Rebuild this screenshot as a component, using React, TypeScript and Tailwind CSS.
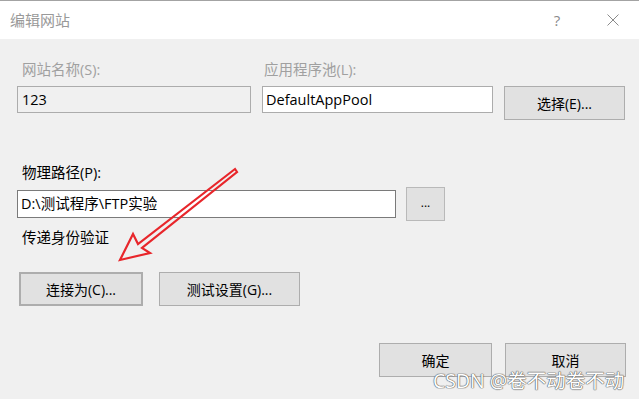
import React from "react";

const font = { fontFamily: '"Open Sans", "Noto Sans CJK SC", sans-serif' };

function Btn({ children, className = "" }: { children: React.ReactNode; className?: string }) {
  return (
    <div
      className={`flex items-center justify-center bg-[#e1e1e1] border border-[#adadad] text-[14px] text-black ${className}`}
    >
      {children}
    </div>
  );
}

export default function App() {
  return (
    <div
      className="relative w-[639px] h-[399px] overflow-hidden bg-[#f0f0f0] border-t border-[#a3a3a3]"
      style={font}
    >
      {/* title bar */}
      <div className="h-[38px] bg-white flex items-center pl-[10px] pr-[18px]">
        <div className="text-[15px] text-[#999999] flex-1">编辑网站</div>
        <div className="text-[15px] text-[#8a8a8a] w-[20px] text-center mr-[40px]">?</div>
        <svg width="12" height="12" viewBox="0 0 12 12" className="mr-[2px]">
          <path d="M0.5 0.5 L11.5 11.5 M11.5 0.5 L0.5 11.5" stroke="#8a8a8a" strokeWidth="1" fill="none" />
        </svg>
      </div>

      {/* body */}
      <div className="flex flex-col pl-[17px] pt-[21px]">
        {/* row 1 */}
        <div className="flex">
          <div className="flex flex-col w-[234px]">
            <div className="h-[20px] leading-[20px] text-[14.5px] text-[#a0a0a0] pl-[5px]">网站名称(S):</div>
            <div className="mt-[6px] h-[27px] border border-[#acacac] bg-[#f0f0f0] flex items-center pl-[4px] text-[14.5px] text-black">
              123
            </div>
          </div>
          <div className="flex flex-col w-[231px] ml-[11px]">
            <div className="h-[20px] leading-[20px] text-[14.5px] text-[#a0a0a0] pl-[2px]">应用程序池(L):</div>
            <div className="mt-[6px] h-[27px] border border-[#acacac] bg-white flex items-center pl-[3px] text-[14.5px] text-black">
              DefaultAppPool
            </div>
          </div>
          <Btn className="ml-[11px] mt-[26px] w-[121px] h-[34px]">选择(E)...</Btn>
        </div>

        {/* physical path */}
        <div className="mt-[43px] h-[20px] leading-[20px] text-[14.5px] text-black pl-[5px]">物理路径(P):</div>
        <div className="flex items-center mt-[4px]">
          <div className="w-[379px] h-[28px] border border-[#7a7a7a] bg-white flex items-center pl-[3px] text-[14.5px] text-black">
            D:\测试程序\FTP实验
          </div>
          <Btn className="ml-[10px] w-[39px] h-[34px] border-[#b9b9b9]">
            <span className="text-[12px] leading-none -mt-[2px]">...</span>
          </Btn>
        </div>

        <div className="mt-[7px] h-[20px] leading-[20px] text-[14.5px] text-black pl-[5px]">传递身份验证</div>

        <div className="flex mt-[24px] ml-[2px]">
          <Btn className="w-[124px] h-[34px] border-2 border-[#0078d7]">连接为(C)...</Btn>
          <Btn className="ml-[16px] w-[141px] h-[34px]">测试设置(G)...</Btn>
        </div>

        <div className="flex mt-[37px] ml-[362px]">
          <Btn className="w-[113px] h-[34px]">确定</Btn>
          <Btn className="ml-[13px] w-[121px] h-[34px]">取消</Btn>
        </div>
      </div>

      {/* watermark */}
      <div className="absolute left-[433px] top-[368px] text-[19.5px] leading-[24px] text-white [text-shadow:0_0_1px_#555,0_0_1px_#555,0_0_1px_#555]">
        CSDN @卷不动卷不动
      </div>

      {/* arrow */}
      <svg className="absolute left-0 top-0 pointer-events-none" width="639" height="399" viewBox="0 0 639 399">
        <path
          d="M235 168 L138 243 L133 233 L120 259 L150 252 L142 247 L237 171 Z"
          fill="none"
          stroke="#e8262b"
          strokeWidth="2.2"
          strokeLinejoin="miter"
        />
      </svg>
    </div>
  );
}
